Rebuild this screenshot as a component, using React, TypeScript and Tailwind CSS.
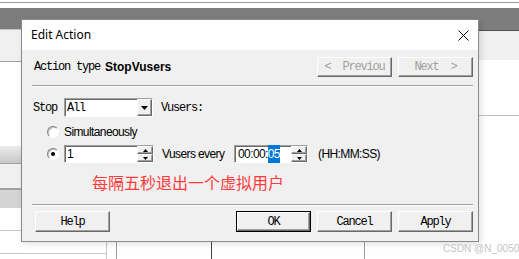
const mono = "font-['Liberation_Mono',monospace] text-[12px] tracking-[-1.2px]";
const sans = "font-['Liberation_Sans',Arial,sans-serif] text-[12px] tracking-[-0.6px]";

const raised =
  'border border-t-white border-l-white border-r-[#696969] border-b-[#696969] bg-[#f0f0f0] shadow-[inset_-1px_-1px_0_#a0a0a0]';
const sunken =
  'border border-t-[#a0a0a0] border-l-[#a0a0a0] border-r-white border-b-white shadow-[inset_1px_1px_0_#696969] bg-white';

const Button = ({
  label,
  disabled = false,
  isDefault = false,
  tall = true,
}: {
  label: string;
  disabled?: boolean;
  isDefault?: boolean;
  tall?: boolean;
}) => (
  <div className={`w-[75px] ${tall ? 'h-[21px]' : 'h-[20px]'} ${isDefault ? 'border border-black' : ''}`}>
    <div
      className={`h-full flex items-center justify-center whitespace-pre ${raised} ${mono} ${
        disabled ? 'text-[#a0a0a0]' : 'text-black'
      }`}
    >
      {label}
    </div>
  </div>
);

const Tri = ({ up = false, w = 7, h = 4 }: { up?: boolean; w?: number; h?: number }) => (
  <svg width={w} height={h} viewBox={`0 0 ${w} ${h}`}>
    <polygon points={up ? `0,${h} ${w / 2},0 ${w},${h}` : `0,0 ${w},0 ${w / 2},${h}`} fill="#000" />
  </svg>
);

const Spin = () => (
  <div className="w-[16px] h-full flex flex-col">
    <div className={`flex-1 flex items-center justify-center ${raised}`}>
      <Tri up w={5} h={3} />
    </div>
    <div className={`flex-1 flex items-center justify-center ${raised}`}>
      <Tri w={5} h={3} />
    </div>
  </div>
);

const Radio = ({ checked = false }: { checked?: boolean }) => (
  <div className="w-[17px] h-[14px] flex items-center">
    <div className="w-[12px] h-[12px] rounded-full border border-t-[#808080] border-l-[#808080] border-r-white border-b-white bg-white shadow-[inset_1px_1px_0_#c0c0c0] flex items-center justify-center">
      {checked && <div className="w-[4px] h-[4px] rounded-full bg-black" />}
    </div>
  </div>
);

export default function App() {
  return (
    <div className="relative w-[519px] h-[259px] overflow-hidden bg-white">
      {/* background windows */}
      <div className="flex flex-col w-full h-full">
        <div className="h-[2px] bg-white" />
        <div className="h-px bg-[#9a9a9a]" />
        <div className="h-[5px] bg-white" />
        <div className="h-[21px] bg-[#7d7d7d]" />
        <div className="h-[213px] flex">
          <div className="w-[21px] flex flex-col">
            <div className="h-px bg-[#c8c8c8]" />
            <div className="h-[31px] bg-[#f0f0f0]" />
            <div className="h-px bg-[#a0a0a0]" />
            <div className="h-[84px] bg-white" />
            <div className="h-[17px] bg-gradient-to-b from-[#ececec] to-[#c8c8c8]" />
            <div className="h-px bg-[#a0a0a0]" />
            <div className="h-[24px] bg-[#f0f0f0]" />
            <div className="h-[2px] bg-[#a0a0a0]" />
            <div className="h-[18px] bg-[#d4d4d4]" />
            <div className="h-[22px] bg-white" />
            <div className="h-px bg-[#c8c8c8]" />
          </div>
          <div className="flex-1" />
          <div className="w-[40px] flex flex-col">
            <div className="h-px bg-[#7d7d7d]" />
            <div className="h-px bg-[#505050]" />
            <div className="h-[29px] bg-[#f0f0f0]" />
            <div className="h-[55px] bg-white" />
            <div className="h-px bg-[#c0c0c0]" />
          </div>
        </div>
        <div className="flex-1 flex">
          <div className="w-[107px] flex flex-col border-r border-[#c8c8c8]">
            <div className="h-[11px]" />
            <div className="h-px bg-[#c8c8c8]" />
          </div>
          <div className="w-[10px] border-r border-[#a0a0a0]" />
          <div className="w-[95px] border-r border-[#404040]" />
          <div className="w-[153px] border-r border-[#a0a0a0]" />
        </div>
      </div>

      {/* dialog */}
      <div className="absolute left-[21px] top-[19px] w-[458px] h-[223px] border border-[#8a8a8a] bg-[#f0f0f0] flex flex-col shadow-[2px_2px_6px_rgba(0,0,0,0.12)]">
        <div className="h-[30px] bg-white flex items-center justify-between pl-[9px] pr-[9px]">
          <span className="font-['Noto_Sans',sans-serif] text-[12px] text-black">Edit Action</span>
          <svg width="11" height="11" viewBox="0 0 11 11">
            <path d="M0.5 0.5 L10.5 10.5 M10.5 0.5 L0.5 10.5" stroke="#000" strokeWidth="1" />
          </svg>
        </div>

        <div className="flex flex-col pt-[7px]">
          <div className="flex items-center pl-[12px] pr-[5px]">
            <span className={`${mono} text-black`}>Action type</span>
            <span className="ml-[5px] font-['Liberation_Sans',Arial,sans-serif] text-[12px] font-bold text-black">
              StopVusers
            </span>
            <div className="ml-auto flex gap-[6px]">
              <Button label="<  Previou" disabled tall={false} />
              <Button label="Next  >" disabled tall={false} />
            </div>
          </div>

          <div className="mt-[8px] ml-[10px] mr-[5px] h-[2px] border-t border-[#a0a0a0] border-b border-b-white" />

          <div className="mt-[11px] flex items-center pl-[11px] h-[19px]">
            <span className={`${mono} w-[31px] text-black`}>Stop</span>
            <div className={`w-[89px] h-full flex items-center ${sunken}`}>
              <span className={`${mono} pl-[2px] flex-1 text-black`}>All</span>
              <div className={`w-[15px] h-full flex items-center justify-center ${raised}`}>
                <Tri />
              </div>
            </div>
            <span className={`${mono} ml-[8px] text-black`}>Vusers:</span>
          </div>

          <div className="mt-[8px] h-[14px] flex items-center pl-[25px]">
            <Radio />
            <span className={`${sans} text-black`}>Simultaneously</span>
          </div>

          <div className="mt-[6px] h-[18px] flex items-center pl-[25px]">
            <Radio checked />
            <div className={`w-[90px] h-full flex items-center ${sunken}`}>
              <span className={`${sans} pl-[2px] flex-1 text-black`}>1</span>
              <Spin />
            </div>
            <span className={`${sans} ml-[8px] w-[72px] text-black`}>Vusers every</span>
            <div className={`w-[74px] h-full flex items-center ${sunken}`}>
              <span className={`${sans} pl-[3px] flex-1 text-black flex`}>
                <span>00:00:</span>
                <span className="bg-[#0078d7] text-white">05</span>
              </span>
              <Spin />
            </div>
            <span className={`${sans} ml-[10px] text-black`}>(HH:MM:SS)</span>
          </div>

          <div className="mt-[9px] h-[20px] flex items-center pl-[70px]">
            <span className="font-['Noto_Sans_CJK_SC',sans-serif] text-[16px] leading-[20px] text-[#ff3b3b]">
              每隔五秒退出一个虚拟用户
            </span>
          </div>

          <div className="mt-[12px] ml-[10px] mr-[5px] h-[2px] border-t border-[#a0a0a0] border-b border-b-white" />

          <div className="mt-[5px] flex pl-[13px] pr-[5px]">
            <Button label="Help" />
            <div className="ml-auto flex gap-[6px]">
              <Button label="OK" isDefault />
              <Button label="Cancel" />
              <Button label="Apply" />
            </div>
          </div>
        </div>
      </div>

      {/* watermark */}
      <div className="absolute left-[443px] top-[241px] font-['Liberation_Sans',Arial,sans-serif] text-[10px] text-[#c4c4c4] whitespace-nowrap">
        CSDN @N_0050
      </div>
    </div>
  );
}
